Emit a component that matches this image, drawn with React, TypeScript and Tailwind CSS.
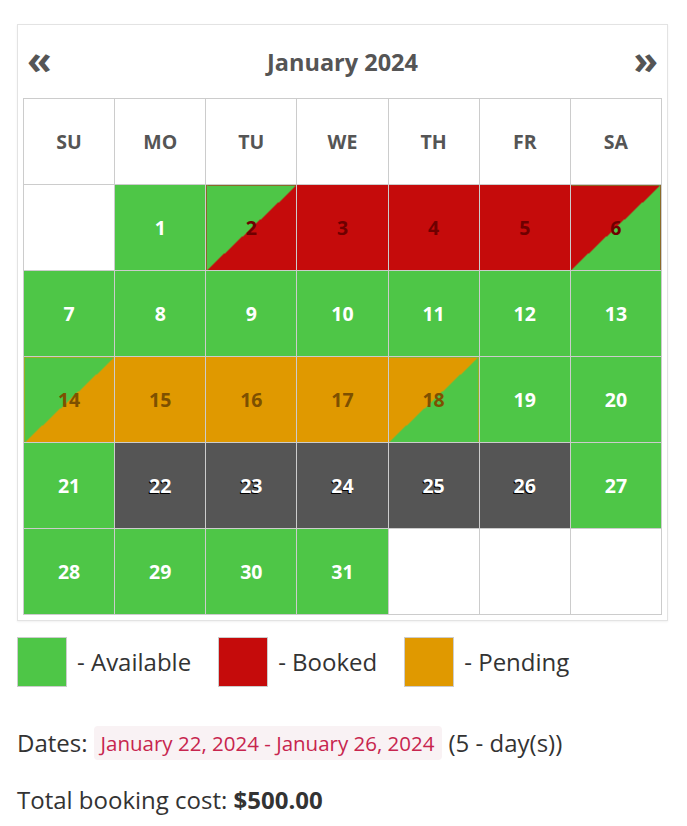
import React from "react";

type Kind = "a" | "b" | "p" | "g" | "ab" | "ba" | "ap" | "pa" | "e";

const GREEN = "#4ec647";

const bgClass: Record<Kind, string> = {
  a: "bg-[#4ec647] text-white",
  b: "bg-[#c50b0b] text-[#6e0000]",
  p: "bg-[#e09900] text-[#7d5000]",
  g: "bg-[#555555] text-white [text-shadow:-1px_1px_0_#000]",
  ab: "bg-[linear-gradient(to_bottom_right,#4ec647_50%,#c50b0b_50%)] text-[#6e0000]",
  ba: "bg-[linear-gradient(to_bottom_right,#c50b0b_50%,#4ec647_50%)] text-[#6e0000]",
  ap: "bg-[linear-gradient(to_bottom_right,#4ec647_50%,#e09900_50%)] text-[#7d5000]",
  pa: "bg-[linear-gradient(to_bottom_right,#e09900_50%,#4ec647_50%)] text-[#7d5000]",
  e: "bg-white",
};

const weeks: [string, Kind][][] = [
  [["", "e"], ["1", "a"], ["2", "ab"], ["3", "b"], ["4", "b"], ["5", "b"], ["6", "ba"]],
  [["7", "a"], ["8", "a"], ["9", "a"], ["10", "a"], ["11", "a"], ["12", "a"], ["13", "a"]],
  [["14", "ap"], ["15", "p"], ["16", "p"], ["17", "p"], ["18", "pa"], ["19", "a"], ["20", "a"]],
  [["21", "a"], ["22", "g"], ["23", "g"], ["24", "g"], ["25", "g"], ["26", "g"], ["27", "a"]],
  [["28", "a"], ["29", "a"], ["30", "a"], ["31", "a"], ["", "e"], ["", "e"], ["", "e"]],
];

const days = ["SU", "MO", "TU", "WE", "TH", "FR", "SA"];

export default function App() {
  return (
    <div className="min-h-[826px] bg-white px-[17px] pt-[24px] font-['Open_Sans',sans-serif] text-[#333]">
      {/* calendar panel */}
      <div className="w-[651px] border border-[#e3e3e3] px-[5px] pb-[5px] shadow-[0_1px_2px_rgba(0,0,0,0.06)]">
        <div className="flex h-[73px] items-center justify-between px-[4px] pt-[2px] text-[#555]">
          <span className="-mt-[8px] text-[40px] font-bold leading-none">«</span>
          <span className="text-[23.5px] font-bold">January 2024</span>
          <span className="-mt-[8px] text-[40px] font-bold leading-none">»</span>
        </div>
        <table className="w-[639px] table-fixed border-collapse">
          <thead>
            <tr>
              {days.map((d) => (
                <th
                  key={d}
                  className="h-[86px] border border-[#cccccc] text-[19.5px] font-bold text-[#555]"
                >
                  {d}
                </th>
              ))}
            </tr>
          </thead>
          <tbody>
            {weeks.map((w, i) => (
              <tr key={i}>
                {w.map(([n, k], j) => (
                  <td
                    key={j}
                    className={`h-[86px] border border-[#cccccc] text-center text-[19.5px] font-bold ${bgClass[k]}`}
                  >
                    {n}
                  </td>
                ))}
              </tr>
            ))}
          </tbody>
        </table>
      </div>

      {/* legend */}
      <div className="mt-[16px] flex items-center text-[24px] text-[#333]">
        <span className="h-[50px] w-[50px] border border-[#cccccc]" style={{ background: GREEN }} />
        <span className="ml-[10px] mr-[27px]">- Available</span>
        <span className="h-[50px] w-[50px] border border-[#cccccc] bg-[#c50b0b]" />
        <span className="ml-[10px] mr-[27px]">- Booked</span>
        <span className="h-[50px] w-[50px] border border-[#cccccc] bg-[#e09900]" />
        <span className="ml-[10px]">- Pending</span>
      </div>

      <div className="mt-[38px] flex h-[36px] items-center text-[24px]">
        <span>Dates:</span>
        <span className="ml-[6px] rounded-[4px] bg-[#f9f2f4] px-[7px] text-[20.5px] leading-[34px] text-[#c7254e]">
          January 22, 2024 - January 26, 2024
        </span>
        <span className="ml-[7px]">(5 - day(s))</span>
      </div>

      <div className="mt-[21px] text-[24px]">
        Total booking cost: <b>$500.00</b>
      </div>
    </div>
  );
}
